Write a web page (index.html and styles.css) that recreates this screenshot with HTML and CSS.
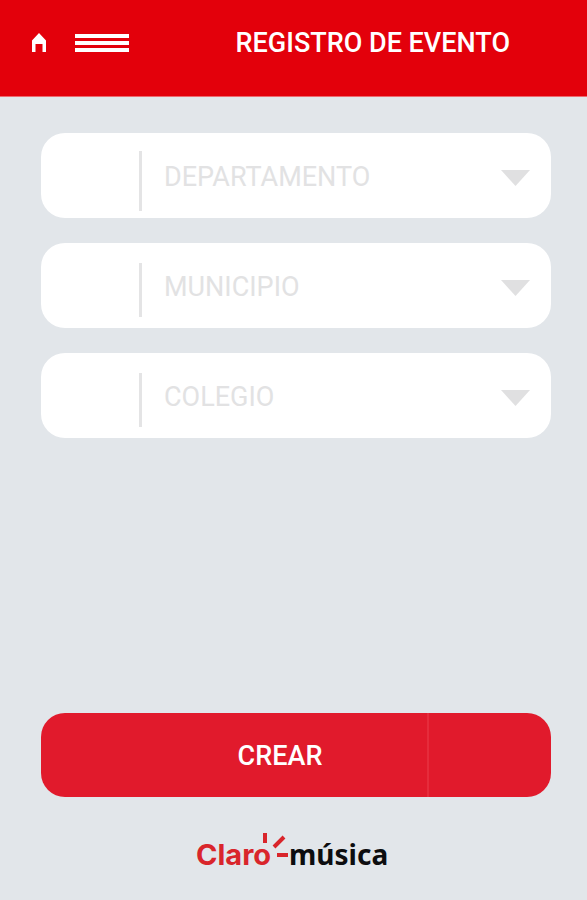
FILE: index.html
```html
<!DOCTYPE html>
<html lang="es">
<head>
  <meta charset="UTF-8">
  <meta name="viewport" content="width=device-width, initial-scale=1.0">
  <title>Registro de evento</title>
  <link rel="stylesheet" href="styles.css">
</head>
<body>
  <!-- Header -->
  <header class="top-bar">
    <nav class="top-nav">
      <a href="#" class="nav-link" aria-label="Inicio">
        <svg width="16" height="20" viewBox="0 0 16 20">
          <path d="M8 0 L1 7.5 V19 H4.5 V11 H11.5 V19 H15 V7.5 Z" fill="#fff"/>
        </svg>
      </a>
      <button type="button" class="nav-link" aria-label="Menú">
        <svg width="54" height="18" viewBox="0 0 54 18">
          <path d="M0 0 H54 V4 H0 Z M0 7 H54 V11 H0 Z M0 14 H54 V18 H0 Z" fill="#fff"/>
        </svg>
      </button>
    </nav>
    <h1>REGISTRO DE EVENTO</h1>
  </header>

  <!-- Event form -->
  <form class="event-form">
    <div class="field">
      <span class="divider divider-tall"></span>
      <select aria-label="Departamento">
        <option>DEPARTAMENTO</option>
      </select>
      <svg class="arrow" width="29" height="16" viewBox="0 0 29 16"><path d="M0 0 H29 L14.5 16 Z"/></svg>
    </div>
    <div class="field">
      <span class="divider"></span>
      <select aria-label="Municipio">
        <option>MUNICIPIO</option>
      </select>
      <svg class="arrow" width="29" height="16" viewBox="0 0 29 16"><path d="M0 0 H29 L14.5 16 Z"/></svg>
    </div>
    <div class="field">
      <span class="divider"></span>
      <select aria-label="Colegio">
        <option>COLEGIO</option>
      </select>
      <svg class="arrow" width="29" height="16" viewBox="0 0 29 16"><path d="M0 0 H29 L14.5 16 Z"/></svg>
    </div>
    <button type="submit" class="create-button">CREAR</button>
  </form>

  <!-- Brand -->
  <footer class="brand">
    <svg width="200" height="46" viewBox="-2 0 200 46">
      <text class="brand-claro" x="0" y="33">Claro</text>
      <path d="M69 1 V11 M78 15 L88 5 M81 23 H92" fill="none" stroke="#d9252b" stroke-width="4"/>
      <text class="brand-musica" x="93" y="33">música</text>
    </svg>
  </footer>
</body>
</html>
```
FILE: styles.css
```css
* {
  box-sizing: border-box;
}

body {
  display: flex;
  flex-direction: column;
  min-height: 100vh;
  margin: 0;
  background-color: #e2e6ea;
  font-family: Roboto, Arial, sans-serif;
}

/* Header */
.top-bar {
  display: flex;
  align-items: center;
  justify-content: space-between;
  height: 97px;
  padding: 0 77px 10px 31px;
  background-color: #e3000b;
  border-bottom: 1px solid #ee6a70;
}

.top-nav {
  display: flex;
  align-items: center;
  gap: 28px;
}

.nav-link {
  display: flex;
  padding: 0;
  border: none;
  background: none;
  cursor: pointer;
}

h1 {
  margin: 0;
  color: white;
  font-size: 27px;
  font-weight: 500;
  line-height: 32px;
}

/* Form */
.event-form {
  flex: 1;
  display: flex;
  flex-direction: column;
  gap: 25px;
  padding: 36px 36px 0 41px;
}

.field {
  position: relative;
  display: flex;
  align-items: center;
  height: 85px;
  padding-left: 98px;
  background-color: white;
  border-radius: 24px;
}

.divider {
  width: 3px;
  height: 54px;
  margin-top: 8px;
  background-color: #e4e4e5;
}

.divider-tall {
  height: 60px;
  margin-top: 10px;
}

.field select {
  flex: 1;
  height: 100%;
  padding: 2px 60px 0 22px;
  appearance: none;
  border: none;
  background: none;
  color: #e2e2e3;
  font-family: inherit;
  font-size: 27px;
  cursor: pointer;
}

.arrow {
  position: absolute;
  top: 37px;
  right: 21px;
  fill: #e0e0e1;
  pointer-events: none;
}

.create-button {
  height: 84px;
  margin-top: auto;
  padding: 2px 32px 0 0;
  border: none;
  border-radius: 24px;
  background-color: #e11a2c;
  background-image: linear-gradient(#e62c3c, #e62c3c);
  background-position: 76% 0;
  background-repeat: no-repeat;
  background-size: 2px 100%;
  color: white;
  font-family: inherit;
  font-size: 27px;
  font-weight: 500;
  cursor: pointer;
}

/* Brand */
.brand {
  display: flex;
  justify-content: center;
  padding: 35px 0 22px;
}

.brand-claro {
  fill: #d9252b;
  font-family: Inter, sans-serif;
  font-size: 29px;
  font-weight: 700;
}

.brand-musica {
  fill: #0d0d0f;
  font-family: "Noto Sans", sans-serif;
  font-size: 28px;
  font-weight: 700;
}
```
